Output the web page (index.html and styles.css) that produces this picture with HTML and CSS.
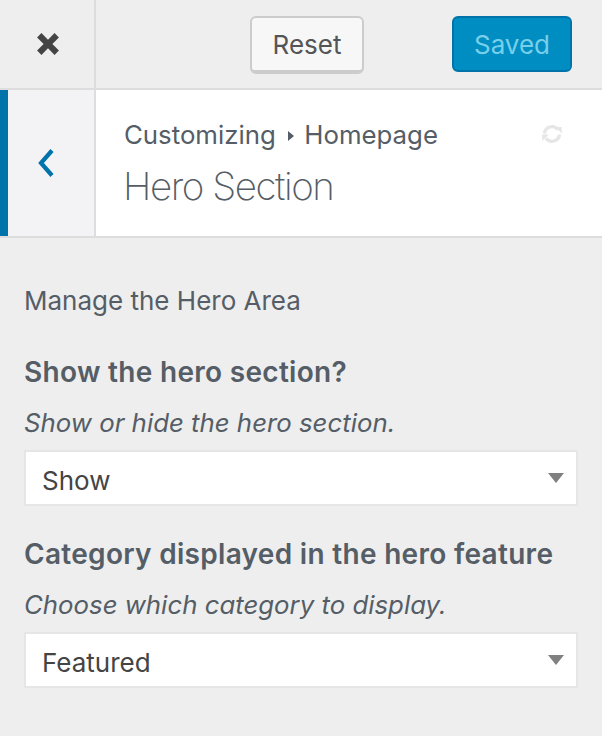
FILE: index.html
```html
<!DOCTYPE html>
<html lang="en">
<head>
  <meta charset="UTF-8">
  <title>Customizing Hero Section</title>
  <link rel="stylesheet" href="styles.css">
</head>
<body>
  <div class="topbar">
    <div class="close-cell">
      <svg class="close-icon" width="30" height="30" viewBox="0 0 22 22"><path d="M3 6.200 6.200 3 11 7.800 15.800 3 19 6.200 14.200 11 19 15.800 15.800 19 11 14.200 6.200 19 3 15.800 7.800 11 3 6.200Z"/></svg>
    </div>
    <div class="actions">
      <button class="btn-reset">Reset</button>
      <button class="btn-saved">Saved</button>
    </div>
  </div>

  <div class="section-head">
    <div class="back-cell">
      <svg class="back-icon" width="18" height="30" viewBox="0 0 18 30"><path d="M15 2.500 4 15l11 12.500" /></svg>
    </div>
    <div class="section-title">
      <div class="crumb">Customizing <span class="crumb-arrow"></span> Homepage</div>
      <h1>Hero Section</h1>
      <svg class="refresh-icon" width="26" height="22" viewBox="0 0 24 20"><path class="refresh-arc" d="M5 9.500A7 7 0 0 1 17.500 6M19 10.500A7 7 0 0 1 6.500 14"/><path d="M15 3.500h6v6zM3 16.500v-6h6z"/></svg>
    </div>
  </div>

  <div class="controls">
    <p class="intro">Manage the Hero Area</p>

    <div class="control">
      <h2>Show the hero section?</h2>
      <p class="hint">Show or hide the hero section.</p>
      <div class="select">Show<span class="caret"></span></div>
    </div>

    <div class="control">
      <h2>Category displayed in the hero feature</h2>
      <p class="hint">Choose which category to display.</p>
      <div class="select">Featured<span class="caret"></span></div>
    </div>
  </div>
</body>
</html>
```

FILE: styles.css
```css
* {
  box-sizing: border-box;
}
body {
  margin: 0;
  background-color: #eeeeee;
  font-family: 'Inter', 'Roboto', sans-serif;
  color: #555d66;
  height: 736px;
  overflow: hidden;
}
.topbar {
  display: flex;
  height: 90px;
  border-bottom: 2px solid #dddddd;
}
.close-cell {
  width: 96px;
  display: flex;
  align-items: center;
  justify-content: center;
  border-right: 2px solid #dddddd;
  padding-left: 2px;
}
.close-icon {
  fill: #444444;
}
.actions {
  flex: 1;
  display: flex;
  align-items: flex-start;
  padding: 16px 30px 0 154px;
  justify-content: space-between;
}
.btn-reset {
  width: 114px;
  height: 58px;
  background-color: #f7f7f7;
  border: 2px solid #cccccc;
  border-bottom-width: 4px;
  border-radius: 6px;
  font: 400 26px 'Inter', sans-serif;
  color: #555555;
  padding: 0;
}
.btn-saved {
  width: 120px;
  height: 56px;
  background-color: #008ec2;
  border: 2px solid #0073aa;
  border-radius: 6px;
  font: 400 26px 'Inter', sans-serif;
  color: #78cfea;
  padding: 0;
}
.section-head {
  display: flex;
  height: 148px;
  background-color: #ffffff;
  border-bottom: 2px solid #dddddd;
}
.back-cell {
  width: 96px;
  background-color: #f3f3f5;
  border-left: 8px solid #0073aa;
  border-right: 2px solid #dddddd;
  display: flex;
  align-items: center;
  justify-content: center;
  padding-right: 10px;
}
.back-icon {
  fill: none;
  stroke: #0073aa;
  stroke-width: 4.2;
}
.section-title {
  flex: 1;
  position: relative;
  padding: 30px 0 0 28px;
}
.crumb {
  font-size: 25.800px;
  line-height: 30px;
}
.crumb-arrow {
  display: inline-block;
  border-left: 6px solid #555d66;
  border-top: 5px solid transparent;
  border-bottom: 5px solid transparent;
  margin: 0 3px 3px 5px;
}
.section-title h1 {
  margin: 12px 0 0 -1px;
  font-size: 38.500px;
  line-height: 48px;
  font-weight: 200;
  letter-spacing: -1.450px;
}
.refresh-icon {
  position: absolute;
  top: 33px;
  right: 37px;
  fill: #e6e6e6;
}
.refresh-arc {
  fill: none;
  stroke: #e6e6e6;
  stroke-width: 3;
}
.controls {
  padding: 47px 24px 0;
}
.intro {
  margin: 0 0 37px;
  font-size: 26px;
  line-height: 32px;
}
.control {
  margin-bottom: 30px;
}
.control h2 {
  margin: 0;
  font-size: 28px;
  line-height: 36px;
  font-weight: 600;
  letter-spacing: 0.300px;
}
.hint {
  margin: 18px 0 12px;
  font-size: 25.800px;
  line-height: 30px;
  font-style: italic;
}
.select {
  position: relative;
  height: 56px;
  background-color: #ffffff;
  border: 2px solid #e6e6e6;
  padding-left: 16px;
  font-size: 26px;
  line-height: 58px;
  color: #444444;
}
.caret {
  position: absolute;
  right: 12px;
  top: 21px;
  border-top: 10px solid #808080;
  border-left: 8px solid transparent;
  border-right: 8px solid transparent;
}
```
